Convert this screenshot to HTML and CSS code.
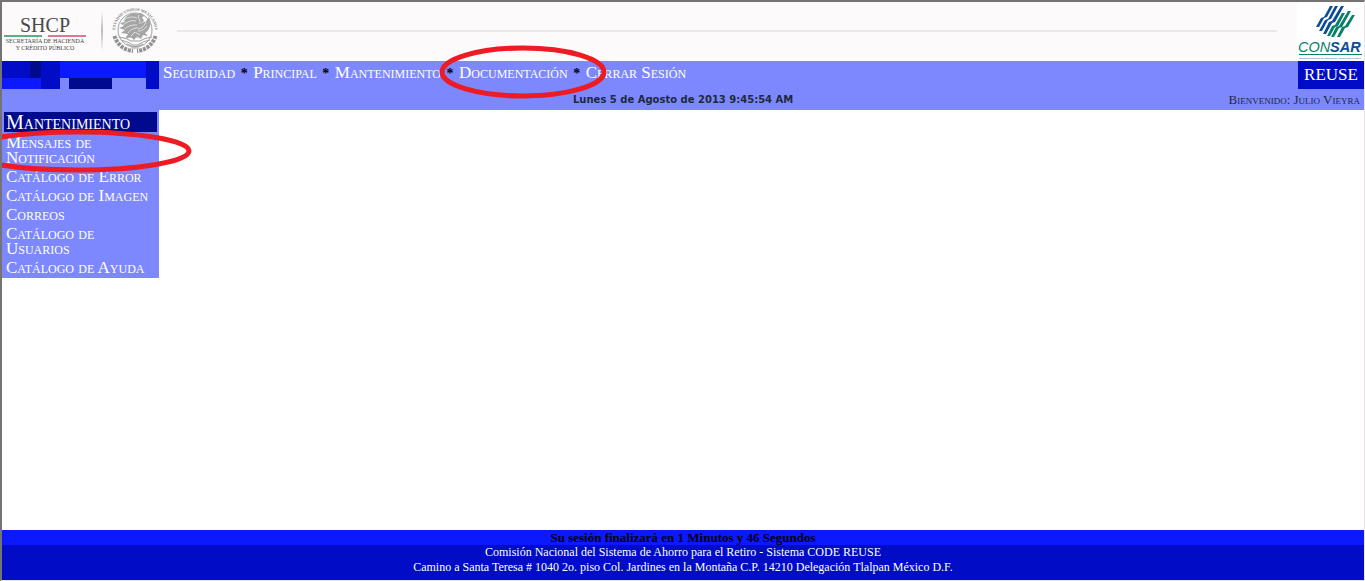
FILE: index.html
```html
<!DOCTYPE html>
<html lang="es">
<head>
<meta charset="utf-8">
<title>CONSAR - Sistema CODE REUSE</title>
<link rel="stylesheet" href="styles.css">
</head>
<body>
<header class="brand">
  <div class="shcp">
    <span class="shcp-name">SHCP</span>
    <span class="shcp-rule"></span>
    <span class="shcp-sub">SECRETARÍA DE HACIENDA<br>Y CRÉDITO PÚBLICO</span>
  </div>
  <span class="brand-divider"></span>
  <svg class="seal" viewBox="0 0 48 48" role="img" aria-label="Estados Unidos Mexicanos">
    <defs><path id="ring" d="M5 31A20 20 0 1 1 43 31"/></defs>
    <text class="seal-text"><textPath href="#ring" startOffset="50%">ESTADOS UNIDOS MEXICANOS</textPath></text>
    <circle class="seal-line" cx="24" cy="24" r="17"/>
    <path class="seal-wreath" d="M3.500 30A21 21 0 0 0 22 45M44.500 30A21 21 0 0 1 26 45"/>
    <path class="seal-fill" d="M13 14c3-6 10-8 14-6l3-1 4 3-3 1 2 4-3 2c5-1 7-4 8-6 3 6 1 13-4 16l3 3-5-1-2 4-4-3-3 4-3-3-6 2 3-5-7-1 4-3-6-2 5-2-4-3 5-1z"/>
    <path class="seal-detail" d="M12 15c4-4 9-5 14-3M12 19c5-4 9-5 13-4M14 23c4-4 8-4 12-4M17 27c3-4 6-5 10-5M28 9c-2 3 2 5 1 9M35 15c-1 5-4 7-8 8M36 20c-3 4-6 5-9 5M20 30l4-4 5 3"/>
    <path class="seal-line" d="M8 31q8 1 12 4h9q4-3 12-4M10 34q8 2 12 5h5q5-4 12-5M16 38q8 5 16 0M19 31h11M20 42h8"/>
  </svg>
  <span class="brand-line"></span>
  <svg class="consar" viewBox="0 0 134 116" role="img" aria-label="CONSAR">
    <path class="c-blue" d="M66 6h6l-12 22-6 2-10 18h-6l10-18 6-2zM76 6h6l-14 26-6 2-12 22h-6l12-22 6-2zM88 6h6l-18 32-6 2-12 22h-6l12-24 6-2z"/>
    <path class="c-green" d="M90 20h6l-14 26-6 2-10 18h-6l10-20 6-2zM102 16h6l-18 32-6 2-10 18h-6l10-20 6-2zM110 24h6l-14 24-6 2-10 18h-6l10-20 6-2z"/>
    <text class="c-word" y="98"><tspan class="c-green" x="2">CON</tspan><tspan class="c-sar" x="66">SAR</tspan></text>
    <path class="c-green" d="M4 102h126v2H4z"/>
    <text class="c-sub" x="4" y="112">Comisión Nacional del Sistema de Ahorro para el Retiro</text>
  </svg>
</header>
<div class="bar">
  <svg class="mosaic" viewBox="0 0 157 28" aria-hidden="true">
    <path fill="#000cc6" d="M0 0h58v28H39V17H0zM144 0h13v28h-13z"/>
    <path fill="#000a8c" d="M28 0h11v17H28zM67 17h43v11H67z"/>
    <path fill="#0a19ff" d="M58 0h86v17H58zM0 17h39v11H0z"/>
  </svg>
  <div class="bar-main">
    <nav class="menu">
      <a href="#">Seguridad</a><b>*</b><a href="#">Principal</a><b>*</b><a href="#">Mantenimiento</a><b>*</b><a class="marked" href="#">Documentación<svg class="mark mark-doc" viewBox="0 0 168 54" aria-hidden="true"><ellipse cx="84" cy="27" rx="81" ry="24"/></svg></a><b>*</b><a href="#">Cerrar Sesión</a>
    </nav>
    <time class="clock">Lunes 5 de Agosto de 2013 9:45:54 AM</time>
  </div>
  <div class="user">
    <span class="reuse">REUSE</span>
    <span class="welcome">Bienvenido: Julio Vieyra</span>
  </div>
</div>
<main class="content">
  <nav class="side">
    <h1 class="side-title">Mantenimiento</h1>
    <a class="marked" href="#">Mensajes de Notificación<svg class="mark mark-side" viewBox="0 0 230 44" aria-hidden="true"><ellipse cx="115" cy="22" rx="112" ry="19"/></svg></a>
    <a href="#">Catálogo de Error</a>
    <a href="#">Catálogo de Imagen</a>
    <a href="#">Correos</a>
    <a href="#">Catálogo de Usuarios</a>
    <a href="#">Catálogo de Ayuda</a>
  </nav>
</main>
<footer class="foot">
  <p class="session">Su sesión finalizará en 1 Minutos y 46 Segundos</p>
  <p>Comisión Nacional del Sistema de Ahorro para el Retiro - Sistema CODE REUSE</p>
  <p>Camino a Santa Teresa # 1040 2o. piso Col. Jardines en la Montaña C.P. 14210 Delegación Tlalpan México D.F.</p>
</footer>
</body>
</html>
```
FILE: styles.css
```css
* { box-sizing: border-box; }
body {
  margin: 0;
  min-height: 100vh;
  display: flex;
  flex-direction: column;
  overflow-x: hidden;
  border-top: 2px solid #757373;
  border-left: 2px solid #757373;
  border-right: 1px solid #e8e6e6;
  border-bottom: 1px solid #e8e6e6;
  background: #fff;
  font-family: "Liberation Serif", serif;
}
a { color: #fff; text-decoration: none; }
p { margin: 0; }

.brand { display: flex; height: 59px; background: #fcfafa; }
.shcp {
  display: flex;
  flex-direction: column;
  align-items: center;
  width: 86px;
  padding-top: 14px;
  color: #484848;
}
.shcp-name { font-size: 20px; line-height: 19px; }
.shcp-rule {
  width: 82px;
  height: 2px;
  background: linear-gradient(90deg, #5cae85 46%, transparent 46% 54%, #dd7990 54%);
}
.shcp-sub { margin-top: 1px; font-size: 6px; line-height: 7px; text-align: center; white-space: nowrap; }
.brand-divider {
  width: 2px;
  height: 40px;
  margin: 9px 8px 0 13px;
  background: linear-gradient(#fcfafa, #bbb, #fcfafa);
}
.seal { width: 48px; height: 48px; margin-top: 4px; }
.seal-text { font: bold 4px "Liberation Serif", serif; fill: #7b7b7b; text-anchor: middle; }
.seal-line { fill: none; stroke: #a2a2a2; stroke-width: 1; }
.seal-wreath { fill: none; stroke: #929292; stroke-width: 4; stroke-dasharray: 3 1; }
.seal-fill { fill: #a5a5a5; }
.seal-detail { fill: none; stroke: #e4e4e4; stroke-width: 1; }
.brand-line { flex: 1; height: 2px; margin: 28px 20px 0 18px; background: #e9e7e7; }
.consar { width: 67px; height: 58px; margin-top: 1px; background: #fff; }
.c-blue, .c-sub { fill: #0b4c96; }
.c-green { fill: #0b8068; }
.c-word { font: italic 29px "Liberation Sans", sans-serif; }
.c-sar { font-weight: bold; fill: #0b4c96; }
.c-sub { font: 5px "Liberation Sans", sans-serif; }

.bar { display: flex; height: 49px; background: #7d88ff; }
.mosaic { width: 157px; height: 28px; }
.bar-main { flex: 1; display: flex; flex-direction: column; justify-content: space-between; padding: 4px 0 3px; }
.menu { padding-left: 4px; font-size: 17px; line-height: 16px; font-variant: small-caps; white-space: nowrap; }
.menu b { display: inline-block; width: 18px; font-size: 14px; color: #000; text-align: center; }
.marked { position: relative; }
.mark { position: absolute; z-index: 1; pointer-events: none; }
.mark ellipse { fill: none; stroke: #ed1c24; stroke-width: 5; }
.mark-doc { left: -20px; top: -18px; width: 168px; height: 54px; }
.mark-side { left: -42px; top: -4px; width: 230px; height: 44px; }
.clock { padding-left: 414px; font: bold 10px/14px "DejaVu Sans", sans-serif; color: #1c2a3c; }
.user { display: flex; flex-direction: column; align-items: flex-end; justify-content: space-between; }
.reuse { width: 66px; font-size: 17px; line-height: 28px; text-align: center; color: #fff; background: #000cc6; }
.welcome { padding: 0 4px 3px 0; font-size: 13px; line-height: 14px; font-variant: small-caps; color: #1c2a3c; }

.content { flex: 1; display: flex; align-items: flex-start; }
.side { width: 157px; padding: 2px 2px 1px; background: #7d88ff; font-size: 17px; line-height: 15px; font-variant: small-caps; }
.side-title { margin: 0 0 1px; padding: 0 2px; font-size: 20px; font-weight: normal; line-height: 20px; color: #fff; background: #000a8c; }
.side a { display: block; padding: 2px 8px 2px 2px; }

.foot { color: #fff; background: #000cc6; font-size: 12px; line-height: 15px; text-align: center; padding-bottom: 5px; }
.session { font-size: 13px; font-weight: bold; color: #000; background: #0a19ff; }
```
